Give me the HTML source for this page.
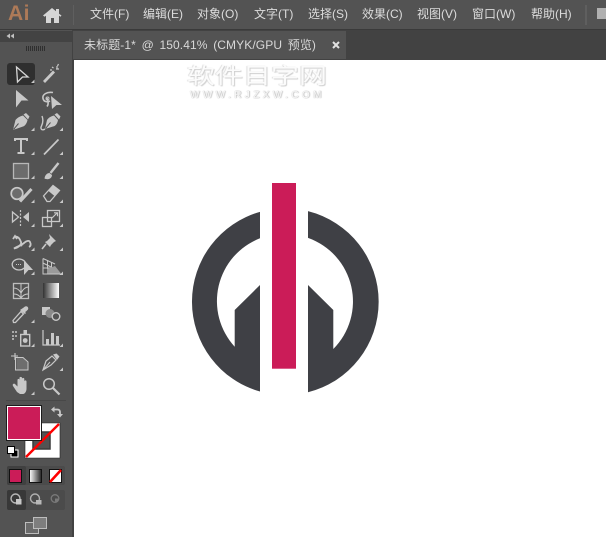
<!DOCTYPE html>
<html><head><meta charset="utf-8">
<style>
html,body{margin:0;padding:0;width:606px;height:537px;overflow:hidden;background:#fff}
body{position:relative;font-family:"Liberation Sans","Noto Sans CJK SC",sans-serif}
.a{position:absolute}
.m{position:absolute;top:6px;font-size:12px;line-height:16px;color:#dcdcdc;white-space:nowrap}
</style></head><body>
<div class="a" style="left:0;top:0;width:606px;height:30px;background:#535353;border-bottom:1px solid #3a3a3a;box-sizing:border-box"></div>
<div class="a" style="left:0;top:30px;width:606px;height:30px;background:#424242"></div>
<div class="a" style="left:0;top:30px;width:72px;height:507px;background:#535353"></div>
<div class="a" style="left:0;top:31px;width:72px;height:11px;background:#434343"></div>
<div class="a" style="left:72px;top:30px;width:2px;height:507px;background:#424242"></div>
<div class="a" style="left:73px;top:31px;width:273px;height:28px;background:#535353"></div>
<div class="a" style="left:74px;top:60px;width:532px;height:477px;background:#fff"></div>

<div class="a" style="left:8px;top:1px;font-size:21px;line-height:26px;font-weight:bold;color:#ad7a58;letter-spacing:.5px">Ai</div>
<svg class="a" style="left:0;top:0" width="74" height="30"><path d="M43 15.500L52 8 56 11.300V9h3v4.800l2.500 1.700-1 1.200-1.500-1V23h-5v-5h-3v5h-5v-7.300l-1.400 1z" fill="#d6d6d6"/><rect x="73" y="5" width="2" height="20" fill="#5f5f5f"/></svg>
<div class="m" style="left:90px">文件(F)</div>
<div class="m" style="left:143px">编辑(E)</div>
<div class="m" style="left:197px">对象(O)</div>
<div class="m" style="left:254px">文字(T)</div>
<div class="m" style="left:308px">选择(S)</div>
<div class="m" style="left:362px">效果(C)</div>
<div class="m" style="left:417px">视图(V)</div>
<div class="m" style="left:472px">窗口(W)</div>
<div class="m" style="left:531px">帮助(H)</div>
<div class="a" style="left:585px;top:5px;width:2px;height:20px;background:#5f5f5f"></div>
<div class="a" style="left:597px;top:8px;width:9px;height:11px;background:#b0b0b0"></div>

<div class="m" style="left:84px;top:37px;color:#d8d8d8;letter-spacing:.1px;word-spacing:2.2px">未标题-1* @ 150.41% (CMYK/GPU 预览)</div>
<svg class="a" style="left:332px;top:41px" width="8" height="8"><path d="M1 1l6 6M7 1L1 7" stroke="#e2e2e2" stroke-width="2"/></svg>

<div class="a" style="left:187px;top:62px;width:145px;font-size:28px;line-height:32px;color:#fbfbfb;white-space:nowrap;font-family:'Noto Sans CJK SC',sans-serif;transform:scaleY(.8);transform-origin:0 0;text-shadow:1px 1px 1px #cfcfcf,-1px 0 1px #dcdcdc">软件目字网</div>
<div class="a" style="left:190px;top:90px;font-size:10px;line-height:12px;letter-spacing:3.4px;color:#f8f8f8;white-space:nowrap;text-shadow:0 0 1px #b0b0b0,1px 0 1px #c4c4c4">WWW.RJZXW.COM</div>

<svg class="a" style="left:0;top:0" width="606" height="537">
<path d="M260 211.850A93.350 93.350 0 0 0 260 391.550V285L234.700 310V346.700A67.350 67.350 0 0 1 260 238.300Z" fill="#3f4045"/>
<path d="M308 211.150A93.350 93.350 0 0 1 308 392.250V285L333.300 310V349A67.350 67.350 0 0 0 308 237.900Z" fill="#3f4045"/>
<rect x="272" y="183" width="24" height="185.700" fill="#cb1c58"/>
</svg>

<svg class="a" style="left:0;top:0" width="74" height="537" fill="none" stroke="#c8c8c8" stroke-width="1.300">
<path d="M10 33.500l-3.500 2.500 3.500 2.500zM14 33.500l-3.500 2.500 3.500 2.500z" fill="#c0c0c0" stroke="none"/>
<path d="M26.500 46v5M28.500 46v5M30.500 46v5M32.500 46v5M34.500 46v5M36.500 46v5M38.500 46v5M40.500 46v5M42.500 46v5M44.500 46v5" stroke="#2f2f2f" stroke-width="1"/>

<rect x="7" y="63" width="28" height="22" rx="3" fill="#2f2f2f" stroke="none"/>
<path d="M16.500 67L28 77H22.500L17.500 82Z" stroke="#d6d6d6"/>
<path d="M44 82L54 71.500" stroke-width="2.800"/>
<path d="M52 67l1.500 1M57 66v3M59 69h-3M50 70h2M58.500 64l-1 2" stroke-width="1.200"/>
<!-- direct -->
<path d="M16 90L28.500 100.500H21.500L16 107.500Z" fill="#c8c8c8" stroke="none"/>
<!-- group -->
<path d="M53 92.500c-6-1-11 2-10 6s5 3.500 7 2.500M47 98c1 3 2 6 0 8.500" stroke-width="1.600"/>
<path d="M51 96L62 105H56.500L52 109Z" fill="#c8c8c8" stroke="none"/>
<circle cx="47.500" cy="98.500" r="1.500" stroke-width="1"/>
<!-- pen -->
<path d="M13 130L15.500 120C18 117 21 116 23 115.500L27.500 120C27 123 25 126 23 126.500Z" fill="#c8c8c8" stroke="none"/>
<path d="M23.500 114.500L26 113 29.500 116.500 28 119.500Z" fill="#c8c8c8" stroke="none"/>
<path d="M13.500 129.500l5-6" stroke="#535353" stroke-width="1"/>
<!-- curvature pen -->
<path d="M45 129L47 120C49 117 52 116 54 115.500L58 120C57.500 123 56 126 53 126.500Z" fill="#c8c8c8" stroke="none"/>
<path d="M54.500 114.500L57 113 60.500 116.500 59 119.500Z" fill="#c8c8c8" stroke="none"/>
<path d="M45.500 128.500l5-6" stroke="#535353" stroke-width="1"/>
<path d="M45 129c-3 2-5 0-3.500-3s2-6 .5-10" stroke-width="1.400"/>
<!-- T -->
<path d="M15 141V139H27V141M21 139V152.500M17.500 153H24.500" stroke-width="2"/>
<!-- line -->
<path d="M44 154.500L58.500 139.500" stroke-width="1.700"/>
<!-- rect -->
<rect x="13.500" y="163.500" width="15" height="15" fill="#6c6c6c" stroke="#b8b8b8"/>
<!-- brush -->
<path d="M44.500 178.500c.5-3.500 2.500-5.500 5-5.500l2.500 2c0 3-3.500 5.500-7.500 3.500z" fill="#c8c8c8" stroke="none"/>
<path d="M50.500 173l8-10" stroke-width="2.400"/>
<!-- shaper -->
<circle cx="17" cy="193.500" r="5.800" fill="#6c6c6c" stroke-width="1.700"/>
<path d="M20 201.500L31.500 189" stroke-width="3"/>
<!-- eraser -->
<path d="M43.500 196L53 185.500L59.500 190.500L50 201.500H47Z" stroke-width="1.300"/>
<path d="M48.500 191L54.500 196L59.500 190.500L53 185.500Z" fill="#c8c8c8" stroke="none"/>
<!-- reflect -->
<path d="M12.500 212V222L18.500 217Z" />
<path d="M29 212V222L23 217Z" fill="#c8c8c8" stroke="none"/>
<path d="M20.500 210V226" stroke-width="1.200" stroke-dasharray="2 1.500"/>
<!-- scale -->
<rect x="42.500" y="217.500" width="9" height="9"/>
<rect x="47.500" y="210.500" width="12" height="11"/>
<path d="M52 218l5-5M54 212.800h3.500v3.500" stroke-width="1.200"/>
<!-- warp -->
<path d="M13 239l2-3 2 3M15 236.500c4 0 5 3 6 5.500s-3 6-7 6.500c3-2 7-3 10-5.500 2-2 5-3 6-1s1 4-1 5" stroke-width="1.800"/>
<circle cx="21" cy="245" r="1.500" fill="#c8c8c8" stroke="none"/>
<!-- pin -->
<path d="M49 234l7 7-2 1-3 3-1 2-5-5 2-1 3-3z" fill="#c8c8c8" stroke="none"/>
<path d="M46 244l-4 5" stroke-width="1.600"/>
<!-- free transform -->
<ellipse cx="19" cy="264.500" rx="6.800" ry="5.500" stroke-width="1.300"/>
<path d="M16 264.500h6" stroke-dasharray="1 1" stroke-width="1"/>
<path d="M24 260L33 270H28.500L24 275Z" fill="#c8c8c8" stroke="none"/>
<!-- perspective -->
<path d="M43 258.500V274H60.500M43 258.500L55 264M43 263L51 267M43 268H53M47.500 260V274M51.500 262.500V271" stroke-width="1"/>
<path d="M47 269L55 266 61 273.500H47Z" fill="#9a9a9a" stroke="none"/>
<!-- mesh -->
<rect x="13.500" y="283.500" width="15" height="15" stroke="#bdbdbd"/>
<path d="M13.500 288c4 0 6 2 7.500 5 2-4 4-6 7.500-6M21 284v14M14 294c3 0 5 1 7 4 2-3 4-4 7-4" stroke-width="1"/>
<!-- gradient -->
<defs><linearGradient id="g"><stop offset="0" stop-color="#333"/><stop offset="1" stop-color="#fff"/></linearGradient>
<linearGradient id="g2"><stop offset="0" stop-color="#fff"/><stop offset="1" stop-color="#222"/></linearGradient></defs>
<rect x="43" y="283" width="16" height="15" fill="url(#g)" stroke="none"/>
<!-- eyedropper -->
<path d="M13.500 322.500l-.500-2 8-9 2.500 2.500-8 8.500z" stroke-width="1.300"/>
<path d="M20 310l3-2 2-1.500c2-1 4 1 3 3l-2 2-1 .500 1 1-1 1-5-4z" fill="#c8c8c8" stroke="none"/>
<!-- blend -->
<rect x="42" y="307" width="8" height="8" fill="#c8c8c8" stroke="none"/>
<circle cx="50" cy="313.500" r="4.500" fill="#8a8a8a" stroke="none"/>
<circle cx="56" cy="316.500" r="3.800" fill="#535353" stroke-width="1.400"/>
<!-- symbol spray -->
<path d="M12 331h2v2h-2zM15 331h2v2h-2zM12 335h2v2h-2zM12 338h2v2h-2zM15 335h2v2h-2z" fill="#a8a8a8" stroke="none"/>
<rect x="20.700" y="334.500" width="9" height="11.500" stroke-width="1.400"/>
<circle cx="25.200" cy="340.500" r="2.400" fill="#c8c8c8" stroke="none"/>
<rect x="23.500" y="330" width="3.500" height="4" fill="#c8c8c8" stroke="none"/>
<!-- graph -->
<path d="M43 330V345H60" stroke-width="1.200"/>
<path d="M46 339h3v6h-3zM51 333h3v12h-3zM56 336h3v9h-3z" fill="#c8c8c8" stroke="none"/>
<!-- artboard -->
<path d="M11 356h7M15 353v7" stroke-width="1.100"/>
<path d="M16.500 358H23L28 363V369.500H16.500Z" fill="#6e6e6e" stroke="none"/>
<path d="M15.500 358V370H28V362L23 357.500H15.500" stroke-width="1"/>
<!-- slice -->
<path d="M43 370L46 361 52 356 56 360 51 365Z" stroke-width="1.200"/>
<path d="M53 354.500L56.500 353.500 59.500 356.500 57 360Z" fill="#c8c8c8" stroke="none"/>
<path d="M43 370L50 362" stroke-width="1"/>
<!-- hand -->
<path d="M17 392l-4-6c-1-2 1-3 2-2l2.500 2.500V380c0-1.500 2-1.500 2 0v3-5c0-1.500 2.500-1.500 2.500 0v5-4c0-1.500 2.300-1.500 2.300 0v5-2.500c0-1.500 2.200-1.500 2.200 0V389c0 2-1.500 5-3.500 5H20z" fill="#c8c8c8" stroke="none"/>
<!-- zoom -->
<circle cx="49" cy="384" r="5.300" stroke-width="1.500"/>
<path d="M53 388L59.500 394.500" stroke-width="2.200"/>

<!-- corner triangles -->
<path d="M34.500 83v-3.500l-3.500 3.500zM34.500 131v-3.500l-3.500 3.500zM63 131v-3.500l-3.500 3.500zM34.500 155v-3.500l-3.500 3.500zM63 155v-3.500l-3.500 3.500zM34.500 179v-3.500l-3.500 3.500zM63 179v-3.500l-3.500 3.500zM34.500 203v-3.500l-3.500 3.500zM63 203v-3.500l-3.500 3.500zM34.500 227v-3.500l-3.500 3.500zM63 227v-3.500l-3.500 3.500zM34.500 251v-3.500l-3.500 3.500zM63 251v-3.500l-3.500 3.500zM34.500 275v-3.500l-3.500 3.500zM63 275v-3.500l-3.500 3.500zM34.500 323v-3.500l-3.500 3.500zM34.500 347v-3.500l-3.500 3.500zM63 347v-3.500l-3.500 3.500zM63 371v-3.500l-3.500 3.500zM34.500 395v-3.500l-3.500 3.500z" fill="#c8c8c8" stroke="none"/>

<path d="M6 400.500H66" stroke="#484848" stroke-width="1"/>

<!-- stroke swatch -->
<path fill-rule="evenodd" d="M25 423H60V458H25ZM33 432V449H50V432Z" fill="#fff" stroke="#222" stroke-width=".6"/>
<path d="M33 432H50V449H33Z" stroke="#3c3c3c" stroke-width="1.500"/>
<path d="M26 457L59 424" stroke="#f00" stroke-width="2.400"/>
<!-- fill swatch -->
<rect x="6.500" y="405.500" width="35" height="35" fill="#fff" stroke="#1c1c1c" stroke-width="1"/>
<rect x="8" y="407" width="32" height="32" fill="#cb1c58" stroke="none"/>
<!-- swap -->
<path d="M52 409.500H57.500C59.500 409.500 60 411 60 412.500V415" stroke-width="1.800"/>
<path d="M51 409.500L54.500 406.500V412.500ZM57 414H63L60 417.500Z" fill="#c8c8c8" stroke="none"/>
<!-- default -->
<rect x="11" y="450" width="7" height="7" fill="#000" stroke="#fff" stroke-width="1"/>
<rect x="7.500" y="446.500" width="7" height="7" fill="#fff" stroke="#000" stroke-width="1"/>

<!-- color row -->
<rect x="7" y="466" width="58" height="19" rx="2" fill="#4b4b4b" stroke="none"/>
<rect x="7" y="466" width="19" height="19" rx="2" fill="#404040" stroke="none"/>
<rect x="9.500" y="469.500" width="12" height="13" fill="#cb1c58" stroke="#111" stroke-width="1"/>
<rect x="29.500" y="469.500" width="12" height="13" fill="url(#g2)" stroke="#111" stroke-width="1"/>
<rect x="49.500" y="469.500" width="12" height="13" fill="#fff" stroke="#111" stroke-width="1"/>
<path d="M50 482L61 470" stroke="#f00" stroke-width="2.600"/>

<!-- draw mode -->
<rect x="7" y="490" width="58" height="20" rx="2" fill="#4b4b4b" stroke="none"/>
<rect x="7" y="490" width="19" height="20" rx="2" fill="#383838" stroke="none"/>
<circle cx="15.500" cy="498.500" r="4.500" stroke="#b8b8b8" stroke-width="1.400"/>
<rect x="16" y="499" width="5.500" height="5.500" fill="#c8c8c8" stroke="none"/>
<circle cx="35" cy="498.500" r="4.500" stroke="#b0b0b0" stroke-width="1.400"/>
<rect x="36" y="500" width="5.500" height="4.500" fill="#b8b8b8" stroke="none"/>
<circle cx="55" cy="498.500" r="3.800" stroke="#7a7a7a" stroke-width="1.300"/>
<rect x="55" y="498.500" width="3" height="3" fill="#7a7a7a" stroke="none"/>

<!-- screen mode -->
<rect x="25.500" y="522.500" width="13" height="11" fill="#6a6a6a" stroke="#bdbdbd" stroke-width="1"/>
<rect x="33.500" y="517.500" width="13" height="11" fill="#7e7e7e" stroke="#bdbdbd" stroke-width="1"/>
</svg>
</body></html>
